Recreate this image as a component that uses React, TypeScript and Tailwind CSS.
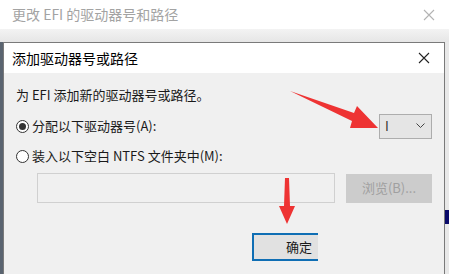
import React from 'react'

const FONT = { fontFamily: '"Noto Sans CJK SC", "Noto Sans", sans-serif' }

function CloseX({ color }: { color: string }) {
  return (
    <svg width="12" height="12" viewBox="0 0 12 12">
      <path d="M1 1 L11 11 M11 1 L1 11" stroke={color} strokeWidth="1.1" />
    </svg>
  )
}

function Radio({ checked }: { checked: boolean }) {
  return (
    <span className="flex h-[13px] w-[13px] items-center justify-center rounded-full border border-[#333] bg-white">
      {checked && <span className="h-[7px] w-[7px] rounded-full bg-[#333]" />}
    </span>
  )
}

function Arrows() {
  return (
    <svg className="pointer-events-none absolute left-0 top-0" width="449" height="274" viewBox="0 0 449 274">
      <path d="M290 91 L354 113 L357 106 L378 128 L350 128 L352 121 Z" fill="#ee3333" />
      <path d="M285 178 L289 178 L290 206 L295 206 L287 224 L279 206 L284 206 Z" fill="#ee3333" />
    </svg>
  )
}

export default function App() {
  return (
    <div className="relative h-[274px] w-[449px] overflow-hidden bg-[#f0f0f0] text-[13px]" style={FONT}>
      {/* back window */}
      <div className="flex h-[29px] items-center justify-between bg-white pl-[12px] pr-[14px]">
        <span className="text-[14px] text-[#a3a3a3]">更改 EFI 的驱动器号和路径</span>
        <CloseX color="#b3b3b3" />
      </div>
      <div className="h-[13px] bg-gradient-to-b from-[#f3f3f3] to-[#e6e6e6]" />

      <div className="flex">
        <div className="w-[3px] bg-[#5a6470]" />
        {/* front dialog */}
        <div className="flex h-[232px] w-[442px] flex-col border-l border-t border-r border-[#7a7a7a] bg-[#f0f0f0]">
          <div className="flex h-[30px] items-center justify-between bg-white pl-[8px] pr-[14px]">
            <span className="text-[14px] text-black">添加驱动器号或路径</span>
            <CloseX color="#222" />
          </div>

          <div className="flex flex-col px-[12px] pt-[12px] text-[#1a1a1a]">
            <div className="h-[20px] leading-[20px]">为 EFI 添加新的驱动器号或路径。</div>

            <div className="mt-[8px] flex h-[26px] items-center justify-between">
              <div className="flex items-center gap-[3px]">
                <Radio checked />
                <span>分配以下驱动器号(A):</span>
              </div>
              <div className="flex h-[25px] w-[53px] items-center justify-between border border-[#adadad] bg-[#e5e5e5] pl-[5px] pr-[6px]">
                <span className="text-[#333]">I</span>
                <svg width="9" height="6" viewBox="0 0 9 6">
                  <path d="M0.5 0.5 L4.5 4.5 L8.5 0.5" stroke="#444" strokeWidth="1" fill="none" />
                </svg>
              </div>
            </div>

            <div className="mt-[7px] flex h-[20px] items-center gap-[3px]">
              <Radio checked={false} />
              <span>装入以下空白 NTFS 文件夹中(M):</span>
            </div>

            <div className="mt-[7px] flex items-center">
              <div className="ml-[21px] h-[30px] w-[298px] border border-[#d0d0d0] bg-[#f0f0f0]" />
              <div className="ml-[11px] flex h-[29px] w-[86px] items-center justify-center bg-[#cccccc] text-[#a0a0a0]">
                浏览(B)...
              </div>
            </div>

            <div className="mt-[30px] flex">
              <div className="ml-[236px] flex h-[28px] w-[66px] items-center justify-center border-y-2 border-l-2 border-[#0f6eb4] bg-[#e1e1e1] pl-[26px] text-[#1a1a1a]">
                确定
              </div>
            </div>
          </div>
        </div>
        <div className="flex w-[4px] flex-col bg-[#e8e8e8]">
          <div className="h-[168px]" />
          <div className="h-[14px] bg-[#0a0a6a]" />
        </div>
      </div>

      <Arrows />
    </div>
  )
}
